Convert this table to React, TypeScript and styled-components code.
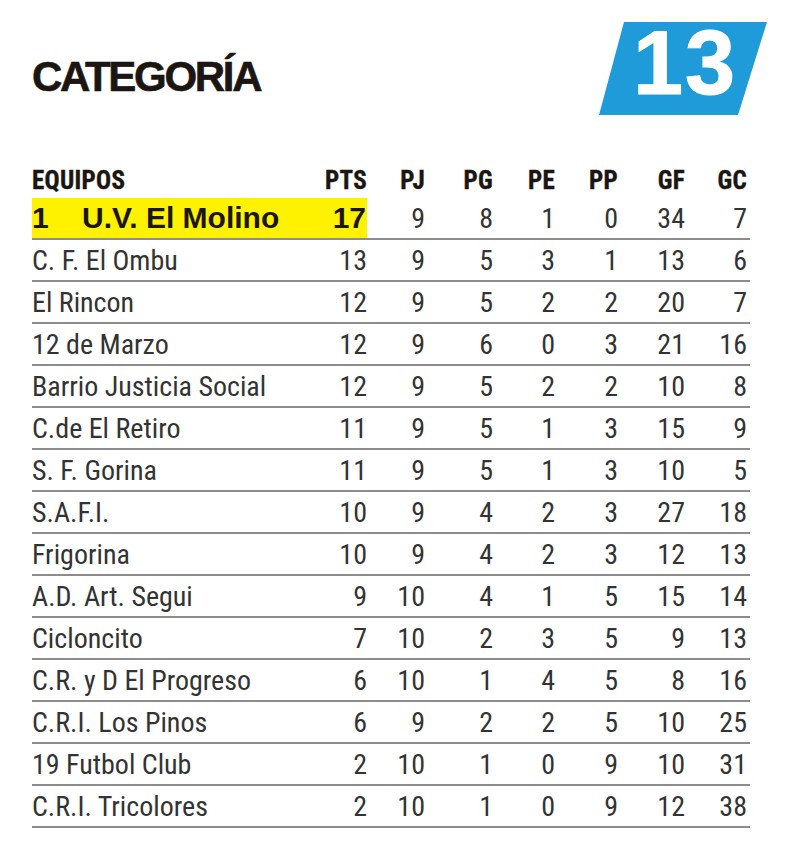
import React from "react";
import styled, { createGlobalStyle } from "styled-components";

const Global = createGlobalStyle`
  html, body { margin: 0; padding: 0; background: #ffffff; }
  body { font-family: "Liberation Sans Narrow", "Roboto Condensed", "DejaVu Sans Condensed", Roboto, "Liberation Sans", sans-serif; }
`;

const Page = styled.div`
  width: 800px;
  height: 850px;
  box-sizing: border-box;
  padding: 22px 33px 0 32px;
  background: #fff;
`;

const TopBar = styled.div`
  display: flex;
  justify-content: space-between;
  align-items: flex-start;
  height: 93px;
`;

const Title = styled.h1`
  margin: 34px 0 0 0;
  font-family: "Liberation Sans", Arial, sans-serif;
  font-weight: 700;
  font-size: 42px;
  line-height: 42px;
  letter-spacing: -2.3px;
  color: #1b1612;
  -webkit-text-stroke: 0.6px #1b1612;
`;

const Badge = styled.div`
  width: 168px;
  height: 93px;
  background: #1e9bd8;
  clip-path: polygon(25px 0, 100% 0, calc(100% - 29px) 100%, 0 100%);
  display: flex;
  align-items: center;
  justify-content: center;
  color: #fff;
  font-family: "Liberation Sans", Arial, sans-serif;
  font-weight: 700;
  font-size: 90px;
  letter-spacing: 2px;
  line-height: 1;
  padding: 0 0 12px 4px;
  box-sizing: border-box;
  -webkit-text-stroke: 1px #fff;
`;

const Table = styled.div`
  margin-top: 47px;
  width: 718px;
  display: grid;
  grid-template-columns: 275px 60px 58px 68px 62px 63px 67px 65px;
`;

const HeadCell = styled.div<{ $left?: boolean; $last?: boolean }>`
  height: 36px;
  display: flex;
  align-items: center;
  justify-content: ${(p) => (p.$left ? "flex-start" : "flex-end")};
  padding-right: ${(p) => (p.$last ? "3px" : "0")};
  font-weight: 700;
  font-size: 25px;
  letter-spacing: 0.3px;
  color: #1b1612;
  -webkit-text-stroke: 0.4px #1b1612;
`;

const Cell = styled.div<{ $left?: boolean; $last?: boolean }>`
  height: 40px;
  border-bottom: 2px solid #8c8c8c;
  display: flex;
  align-items: center;
  justify-content: ${(p) => (p.$left ? "flex-start" : "flex-end")};
  padding-right: ${(p) => (p.$last ? "3px" : "0")};
  font-size: 28px;
  font-weight: 400;
  color: #333333;
  white-space: nowrap;
`;

const HlCell = styled(Cell)`
  background: #fff200;
  font-family: "Liberation Sans", Arial, sans-serif;
  font-weight: 700;
  font-size: 30px;
  color: #1b1612;
  padding-right: ${(p) => (p.$left ? "0" : "1px")};
`;

const Pos = styled.span`
  display: inline-block;
  width: 50px;
`;

const headers = ["PTS", "PJ", "PG", "PE", "PP", "GF", "GC"];

const rows: [string, number[]][] = [
  ["C. F. El Ombu", [13, 9, 5, 3, 1, 13, 6]],
  ["El Rincon", [12, 9, 5, 2, 2, 20, 7]],
  ["12 de Marzo", [12, 9, 6, 0, 3, 21, 16]],
  ["Barrio Justicia Social", [12, 9, 5, 2, 2, 10, 8]],
  ["C.de El Retiro", [11, 9, 5, 1, 3, 15, 9]],
  ["S. F. Gorina", [11, 9, 5, 1, 3, 10, 5]],
  ["S.A.F.I.", [10, 9, 4, 2, 3, 27, 18]],
  ["Frigorina", [10, 9, 4, 2, 3, 12, 13]],
  ["A.D. Art. Segui", [9, 10, 4, 1, 5, 15, 14]],
  ["Cicloncito", [7, 10, 2, 3, 5, 9, 13]],
  ["C.R. y D El Progreso", [6, 10, 1, 4, 5, 8, 16]],
  ["C.R.I. Los Pinos", [6, 9, 2, 2, 5, 10, 25]],
  ["19 Futbol Club", [2, 10, 1, 0, 9, 10, 31]],
  ["C.R.I. Tricolores", [2, 10, 1, 0, 9, 12, 38]],
];

export default function App() {
  return (
    <Page>
      <Global />
      <TopBar>
        <Title>CATEGORÍA</Title>
        <Badge>13</Badge>
      </TopBar>
      <Table>
        <HeadCell $left>EQUIPOS</HeadCell>
        {headers.map((h, i) => (
          <HeadCell key={h} $last={i === headers.length - 1}>
            {h}
          </HeadCell>
        ))}
        <HlCell $left>
          <Pos>1</Pos>U.V. El Molino
        </HlCell>
        <HlCell>17</HlCell>
        {[9, 8, 1, 0, 34, 7].map((v, i) => (
          <Cell key={i} $last={i === 5}>
            {v}
          </Cell>
        ))}
        {rows.map(([name, vals]) => (
          <React.Fragment key={name}>
            <Cell $left>{name}</Cell>
            {vals.map((v, i) => (
              <Cell key={i} $last={i === 6}>
                {v}
              </Cell>
            ))}
          </React.Fragment>
        ))}
      </Table>
    </Page>
  );
}
